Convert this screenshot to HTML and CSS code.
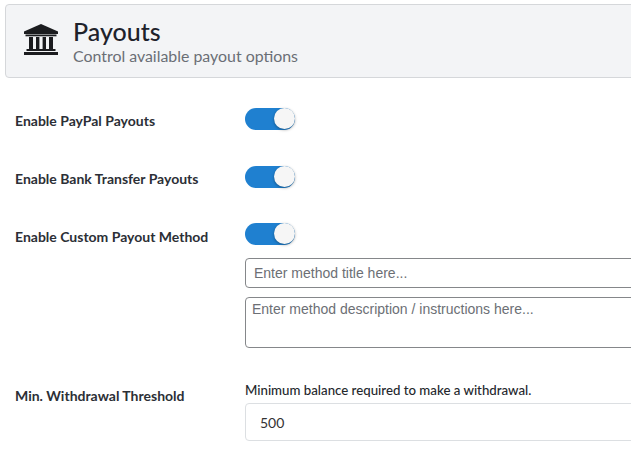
FILE: index.html
```html
<!DOCTYPE html>
<html lang="en">
<head>
<meta charset="utf-8">
<title>Payouts</title>
<link rel="stylesheet" href="styles.css">
</head>
<body>
<div class="page">
  <header class="head">
    <svg class="bank" viewBox="0 0 34 31" aria-hidden="true">
      <path d="M17 0 L34 7.5 V10 H0 V7.5 Z"/>
      <rect x="1.5" y="10.5" width="31" height="1.8"/>
      <rect x="5" y="13" width="4" height="12"/>
      <rect x="12" y="13" width="3.4" height="12"/>
      <rect x="18.6" y="13" width="3.4" height="12"/>
      <rect x="25" y="13" width="4" height="12"/>
      <rect x="2.5" y="25" width="29" height="2"/>
      <rect x="0" y="28" width="34" height="3"/>
    </svg>
    <div>
      <h1 class="title">Payouts</h1>
      <p class="sub">Control available payout options</p>
    </div>
  </header>

  <section class="row row-first">
    <div class="label">Enable PayPal Payouts</div>
    <div class="ctl"><span class="toggle"><span class="knob"></span></span></div>
  </section>
  <section class="row row-second">
    <div class="label">Enable Bank Transfer Payouts</div>
    <div class="ctl"><span class="toggle"><span class="knob"></span></span></div>
  </section>
  <section class="row">
    <div class="label label-custom">Enable Custom Payout Method</div>
    <div class="ctl">
      <span class="toggle"><span class="knob"></span></span>
      <input class="field" type="text" placeholder="Enter method title here...">
      <textarea class="area" placeholder="Enter method description / instructions here..."></textarea>
    </div>
  </section>
  <section class="row row-min">
    <div class="label label-min">Min. Withdrawal Threshold</div>
    <div class="ctl">
      <div class="hint">Minimum balance required to make a withdrawal.</div>
      <input class="num" type="text" value="500">
    </div>
  </section>
</div>
</body>
</html>
```
FILE: styles.css
```css
html, body {
  margin: 0;
  padding: 0;
  background: #fff;
  overflow: hidden;
  height: 453px;
}
.page {
  width: 660px;
  font-family: Lato, "Open Sans", sans-serif;
  color: #212529;
}
.head {
  display: flex;
  align-items: center;
  gap: 15px;
  box-sizing: border-box;
  height: 74px;
  margin: 4px 0 0 5px;
  padding: 0 18px;
  background: #f3f4f6;
  border: 1px solid #d5d7da;
  border-radius: 4px;
}
.bank {
  width: 34px;
  height: 31px;
  margin-bottom: 4px;
  fill: #1b1c1f;
  flex: none;
}
.title {
  margin: 0;
  font-size: 25px;
  line-height: 30px;
  font-weight: 500;
  color: #1e222b;
}
.sub {
  margin: 0;
  font-size: 15.9px;
  line-height: 20px;
  color: #6a6e75;
}
.row {
  display: grid;
  grid-template-columns: 245px 1fr;
  margin-top: 35px;
}
.row-first { margin-top: 30px; }
.row-second { margin-top: 36px; }
.row + .row-min { margin-top: 33px; }
.label {
  padding: 4px 0 0 15px;
  font-size: 14px;
  line-height: 18px;
  font-weight: 700;
  color: #2c2f36;
}
.label-custom { padding-top: 5px; }
.label-min { padding-top: 6px; }
.ctl {
  display: flex;
  flex-direction: column;
  align-items: flex-start;
}
.toggle {
  display: block;
  position: relative;
  width: 50px;
  height: 22px;
  border-radius: 11px;
  background: #1f80d0;
}
.knob {
  position: absolute;
  top: 0;
  right: 0;
  width: 21px;
  height: 21px;
  border-radius: 50%;
  background: #f6f6f6;
  box-shadow: 0 1px 3px rgba(0, 0, 0, .35);
}
.field, .area {
  box-sizing: border-box;
  width: 100%;
  border: 1px solid #85878a;
  border-radius: 4px;
  font-family: "Liberation Sans", Arial, sans-serif;
  font-size: 14px;
  color: #333;
  background: #fff;
  outline: none;
}
.field::placeholder, .area::placeholder { color: #6c6f75; opacity: 1; }
.field {
  height: 30px;
  margin-top: 13px;
  padding: 0 8px;
}
.area {
  display: block;
  height: 51px;
  margin-top: 9px;
  padding: 3px 6px;
  resize: none;
}
.hint {
  font-size: 13.25px;
  line-height: 18px;
  color: #24272c;
  font-weight: 500;
}
.num {
  box-sizing: border-box;
  width: 100%;
  height: 38px;
  margin-top: 4px;
  padding: 0 14px;
  border: 1px solid #dcdfe2;
  border-radius: 4px;
  font-family: Lato, sans-serif;
  font-size: 14px;
  color: #333;
  outline: none;
}
```
